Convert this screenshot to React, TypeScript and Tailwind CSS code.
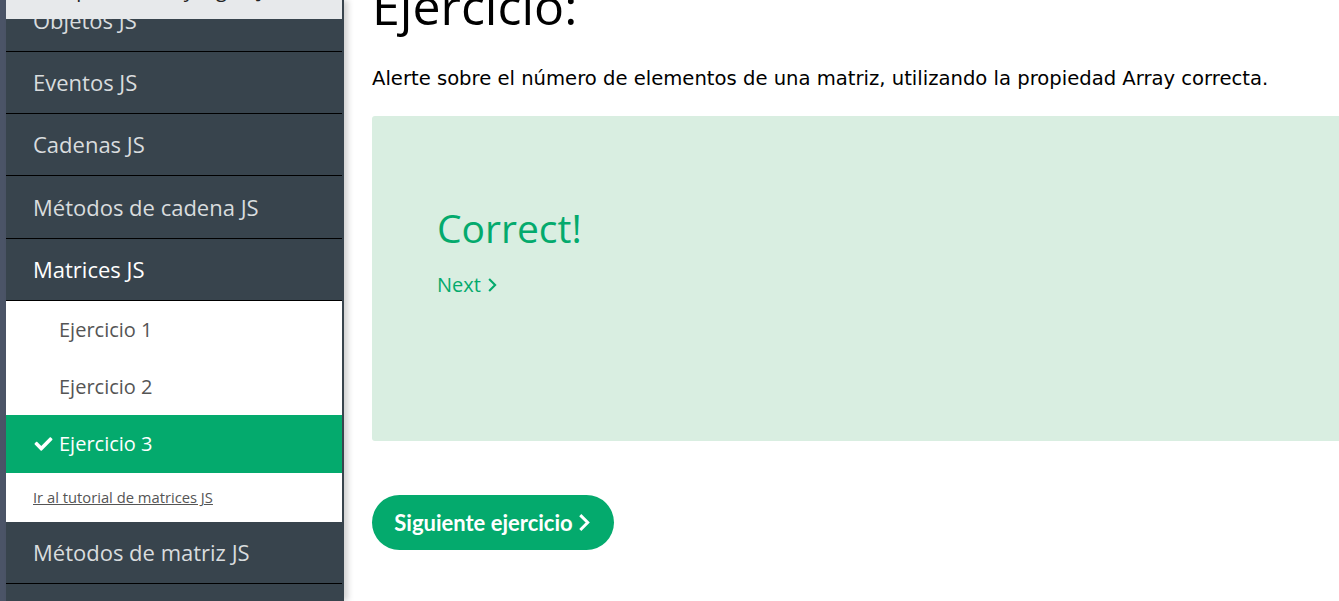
import React from "react";

const sans = { fontFamily: '"Open Sans", "Noto Sans", sans-serif' };

function Chevron({ w, h, sw }: { w: number; h: number; sw: number }) {
  return (
    <svg width={w} height={h} viewBox="0 0 10 16" fill="none" stroke="currentColor" strokeWidth={sw} strokeLinecap="square" className="inline-block">
      <polyline points="2,2 8,8 2,14" />
    </svg>
  );
}

function Row({ label, active, tall }: { label: string; active?: boolean; tall?: boolean }) {
  return (
    <div
      className={`${tall ? "h-[63px]" : "h-[62px]"} border-b border-black flex items-center pl-[27px] text-[22px] ${active ? "text-white" : "text-[#d9dcde]"}`}
    >
      {label}
    </div>
  );
}

function SubRow({ label, selected }: { label: string; selected?: boolean }) {
  return (
    <div
      className={`${selected ? "h-[58px]" : "h-[57px]"} flex items-center text-[20px] ${selected ? "bg-[#04aa6d] text-white pl-[27px]" : "bg-white text-[#555] pl-[53px]"}`}
    >
      {selected && (
        <svg width="21" height="18" viewBox="0 0 512 512" className="mr-[5px]" fill="currentColor">
          <path d="M173.9 439.4l-166.4-166.4c-10-10-10-26.2 0-36.2l36.2-36.2c10-10 26.2-10 36.2 0L192 312.7 432.1 72.6c10-10 26.2-10 36.2 0l36.2 36.2c10 10 10 26.2 0 36.2l-294.4 294.4c-10 10-26.2 10-36.2 0z" />
        </svg>
      )}
      {label}
    </div>
  );
}

export default function App() {
  return (
    <div className="flex h-[601px] w-[1339px] overflow-hidden bg-white" style={sans}>
      <div className="w-[6px] shrink-0 bg-[#4b5467]" />
      <aside className="relative z-10 w-[338px] shrink-0 bg-[#38444d] pr-[2px] shadow-[4px_0_6px_rgba(0,0,0,0.18)]">
        <div className="-mt-[10px]">
          <Row label="Objetos JS" />
          <Row label="Eventos JS" />
          <Row label="Cadenas JS" />
          <Row label="Métodos de cadena JS" tall />
          <Row label="Matrices JS" active />
          <div>
            <SubRow label="Ejercicio 1" />
            <SubRow label="Ejercicio 2" />
            <SubRow label="Ejercicio 3" selected />
            <div className="h-[49px] bg-white flex items-center pl-[27px] text-[14.75px] text-[#555] underline">
              Ir al tutorial de matrices JS
            </div>
          </div>
          <Row label="Métodos de matriz JS" />
          <Row label="Ordenar matrices JS" />
        </div>
        <div className="absolute left-0 right-[2px] top-0 h-[19px] overflow-hidden bg-[#e7e9eb]">
          <div className="absolute left-[27px] top-[-20px] text-[20px] leading-none text-[#222]">
            Comparaciones y lógica JS
          </div>
        </div>
      </aside>
      <main className="flex-1 pl-[28px] min-w-0">
        <h2 className="text-[50px] leading-none -mt-[19px] text-black" style={sans}>
          Ejercicio:
        </h2>
        <p
          className="mt-[36px] text-[19.6px] leading-[24px] text-black whitespace-nowrap"
          style={{ fontFamily: '"DejaVu Sans", Verdana, sans-serif' }}
        >
          Alerte sobre el número de elementos de una matriz, utilizando la propiedad Array correcta.
        </p>
        <div className="mt-[25px] h-[325px] rounded-tl-[3px] rounded-bl-[3px] bg-[#d9eee1] pl-[65px] pt-[92px]">
          <div className="text-[39px] leading-none text-[#04aa6d]">Correct!</div>
          <div className="mt-[23px] text-[20px] text-[#04aa6d] flex items-center gap-[7px]">
            <span>Next</span>
            <Chevron w={9} h={14} sw={2.4} />
          </div>
        </div>
        <button
          className="mt-[54px] h-[55px] w-[242px] rounded-full bg-[#04aa6d] text-white font-bold text-[22px] flex items-center justify-center gap-[6px] pr-[2px]"
          style={{ fontFamily: 'Lato, "Open Sans", sans-serif' }}
        >
          <span>Siguiente ejercicio</span>
          <Chevron w={11} h={17} sw={2.8} />
        </button>
      </main>
    </div>
  );
}
